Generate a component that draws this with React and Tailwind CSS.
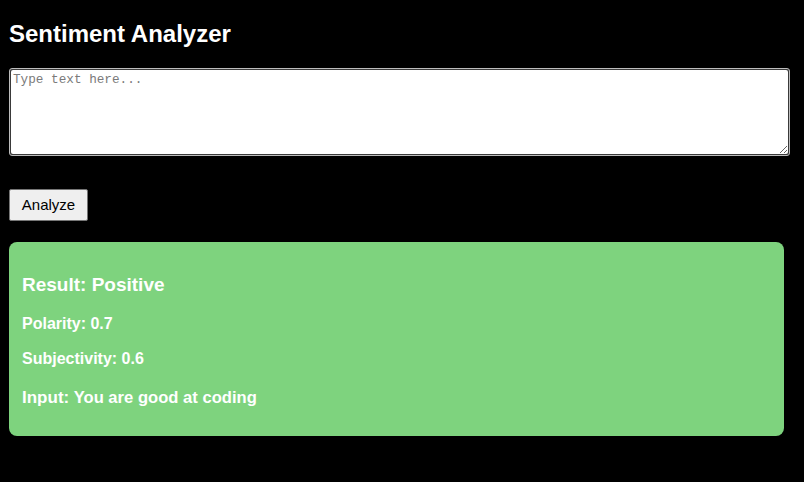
import { useState } from "react";

const SANS = { fontFamily: '"Liberation Sans", Arial, sans-serif' };

export default function App() {
  const [text, setText] = useState("");

  return (
    <div className="min-h-[482px] bg-black text-white px-[9px] pt-[20px]" style={SANS}>
      <h1 className="text-[24px] font-bold leading-[28px] m-0">Sentiment Analyzer</h1>

      <div className="mt-[20px] w-[781px] rounded-[3px] border border-[#bdbdbd] p-px bg-[#3a3a3a]">
        <textarea
          value={text}
          onChange={(e) => setText(e.target.value)}
          placeholder="Type text here..."
          className="block w-full h-[84px] bg-white text-black rounded-[2px] px-[2px] py-[2px] text-[12.7px] leading-[16px] placeholder:text-[#7a7a7a] outline-none resize-y"
          style={{ fontFamily: '"Liberation Mono", "Courier New", monospace' }}
        />
      </div>

      <button className="mt-[33px] block w-[79px] h-[32px] bg-[#efefef] border border-[#767676] text-black text-[15px] rounded-[2px]" style={SANS}>
        Analyze
      </button>

      <div className="mt-[21px] w-[775px] h-[194px] rounded-[8px] bg-[#7ed37e] px-[13px] pt-[32px]">
        <h3 className="text-[19px] font-bold leading-[22px]">Result: Positive</h3>
        <p className="mt-[19px] text-[16px] font-bold leading-[18px]">Polarity: 0.7</p>
        <p className="mt-[17px] text-[16px] font-bold leading-[18px]">Subjectivity: 0.6</p>
        <p className="mt-[20px] leading-[20px]">
          <strong className="font-bold text-[17px]">Input:</strong>{" "}
          <span className="font-bold text-[16.6px]">You are good at coding</span>
        </p>
      </div>
    </div>
  );
}
